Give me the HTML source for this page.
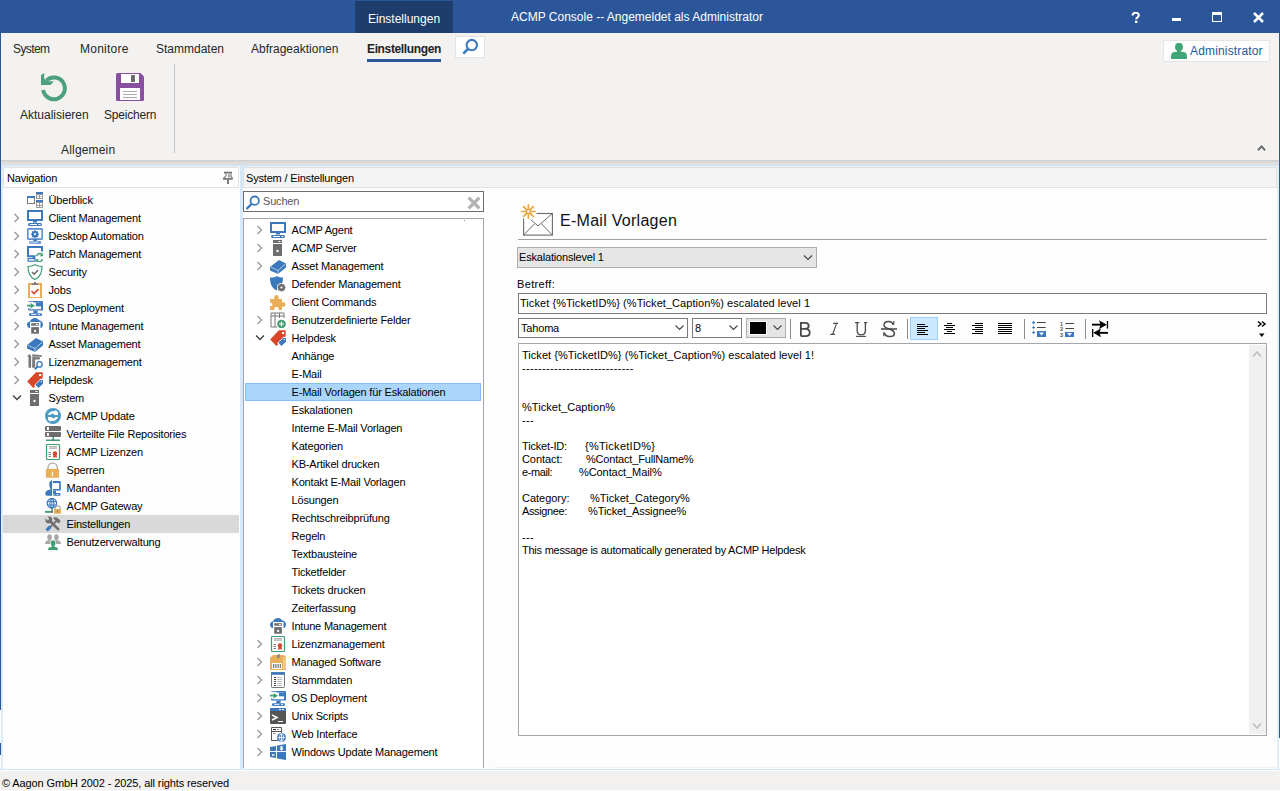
<!DOCTYPE html>
<html><head><meta charset="utf-8">
<style>
*{margin:0;padding:0;box-sizing:border-box}
html,body{width:1280px;height:791px;overflow:hidden;background:#fff;font-family:"Liberation Sans",sans-serif;color:#000}
.ab{position:absolute}
.ic{position:absolute;width:16px;height:16px;line-height:0}
.ic svg,.ab svg{display:block}
.tt{position:absolute;font-size:11px;line-height:18px;white-space:nowrap;letter-spacing:-0.18px}
.rt{position:absolute;font-size:12px;line-height:16px;white-space:nowrap;color:#262626}
.ed{position:absolute;font-size:11px;line-height:13px;white-space:pre;letter-spacing:-0.15px}
</style></head>
<body>
<!-- title bar -->
<div class="ab" style="left:0;top:0;width:1280px;height:33px;background:#2b579a"></div>
<div class="ab" style="left:355px;top:1px;width:98px;height:32px;background:#1e3d6c"></div>
<div class="rt" style="left:368px;top:11px;color:#fff">Einstellungen</div>
<div class="rt" style="left:511px;top:9px;color:#fff">ACMP Console -- Angemeldet als Administrator</div>
<!-- window buttons -->
<svg class="ab" style="left:1131px;top:12px" width="10" height="11" viewBox="0 0 10 11"><path d="M1.6,3.6 C1.6,1.6 3,0.8 4.6,0.8 C6.6,0.8 7.8,1.8 7.8,3.3 C7.8,4.6 7,5.2 6,5.8 C5.4,6.2 5.2,6.5 5.2,7.3" fill="none" stroke="#fff" stroke-width="2.1"/><rect x="4" y="8.6" width="2.4" height="2.4" fill="#fff"/></svg>
<div class="ab" style="left:1172px;top:18px;width:9px;height:3px;background:#fff"></div>
<div class="ab" style="left:1212px;top:12px;width:10px;height:10px;border:1.5px solid #fff;border-top-width:3px"></div>
<svg class="ab" style="left:1253px;top:12px" width="11" height="11" viewBox="0 0 11 11"><path d="M1,1 L10,10 M10,1 L1,10" stroke="#fff" stroke-width="2.5"/></svg>

<!-- ribbon -->
<div class="ab" style="left:0;top:33px;width:1280px;height:127px;background:#f3f2f1"></div>
<div class="rt" style="left:13px;top:41px;letter-spacing:-0.6px">System</div>
<div class="rt" style="left:80px;top:41px;letter-spacing:0.25px">Monitore</div>
<div class="rt" style="left:156px;top:41px">Stammdaten</div>
<div class="rt" style="left:251px;top:41px">Abfrageaktionen</div>
<div class="rt" style="left:367px;top:41px;font-weight:bold;color:#222;letter-spacing:-0.36px">Einstellungen</div>
<div class="ab" style="left:367px;top:59px;width:74px;height:3px;background:#2b579a"></div>
<div class="ab" style="left:455px;top:36px;width:30px;height:22px;background:#fff;border:1px solid #e3e3e3"></div>
<svg class="ab" style="left:455px;top:36px" width="30" height="22" viewBox="0 0 30 22"><circle cx="16.8" cy="9.1" r="5.2" fill="none" stroke="#3b78bd" stroke-width="2.1"/><line x1="12.9" y1="13" x2="8.3" y2="17.6" stroke="#3b78bd" stroke-width="2.6"/></svg>

<div class="ab" style="left:1163px;top:40px;width:107px;height:22px;background:#fdfdfd;border:1px solid #e6e6e6"></div>
<svg class="ab" style="left:1171px;top:43px" width="16" height="16" viewBox="0 0 16 16"><ellipse cx="8" cy="3.9" rx="4" ry="4.1" fill="#40a678"/><rect x="6" y="6" width="3.8" height="5" fill="#40a678"/><path d="M0,15.5 C0,11 0.5,9.5 3.5,9 L6,8.8 H10 L12.5,9 C15.5,9.5 16,11 16,15.5 C16,15.9 15.6,16 15,16 H1 C0.4,16 0,15.9 0,15.5 Z" fill="#40a678"/></svg>
<div class="rt" style="left:1190px;top:43px;color:#2b579a;letter-spacing:0.16px">Administrator</div>

<!-- big buttons -->
<svg class="ab" style="left:34px;top:66px" width="40" height="40" viewBox="0 0 40 40"><path d="M9.2,24 A10.9,10.9 0 1 0 12.6,14.3" fill="none" stroke="#4ca07e" stroke-width="4"/><path d="M7,9 L10.4,7 L10.1,12.6 L14.2,15.2 L19.7,15.2 L16.7,19 L7,19 Z" fill="#4ca07e"/></svg>
<svg class="ab" style="left:110px;top:66px" width="40" height="40" viewBox="0 0 40 40"><path d="M6,8.5 Q6,7 7.5,7 H30.5 L34,10.5 V33.5 Q34,35 32.5,35 H7.5 Q6,35 6,33.5 Z" fill="#8a50a0"/><rect x="11" y="8" width="18" height="9" fill="#fff"/><rect x="21" y="9" width="4" height="7" rx="0.5" fill="#6a6a6a"/><rect x="10" y="22" width="20" height="12" fill="#fff"/><rect x="13" y="25" width="14" height="1" fill="#aaa"/><rect x="13" y="28" width="14" height="1" fill="#aaa"/><rect x="13" y="31" width="14" height="1" fill="#aaa"/></svg>
<div class="rt" style="left:20px;top:107px">Aktualisieren</div>
<div class="rt" style="left:104px;top:107px;letter-spacing:-0.2px">Speichern</div>
<div class="rt" style="left:61px;top:142px;letter-spacing:0.18px">Allgemein</div>
<div class="ab" style="left:174px;top:64px;width:1px;height:89px;background:#c6c6c6"></div>
<svg class="ab" style="left:1257px;top:144px" width="10" height="8" viewBox="0 0 10 8"><path d="M0.9,6.2 L4.5,2.4 L8.1,6.2" fill="none" stroke="#6a6a6a" stroke-width="2"/></svg>

<!-- band under ribbon -->
<div class="ab" style="left:0;top:160px;width:1280px;height:5px;background:linear-gradient(#cfcecd,#d9d9d9 40%,#e2e2e2)"></div>
<div class="ab" style="left:0;top:165px;width:1280px;height:1px;background:#cce4f8"></div>
<div class="ab" style="left:0;top:166px;width:1280px;height:1px;background:#e4f1fc"></div>
<div class="ab" style="left:0;top:167px;width:1280px;height:602px;background:#fdfdfd"></div>

<!-- left window border -->
<div class="ab" style="left:0;top:33px;width:1px;height:677px;background:#2b579a"></div>
<div class="ab" style="left:0;top:743px;width:1px;height:12px;background:#2b579a"></div>
<div class="ab" style="left:1279px;top:33px;width:1px;height:705px;background:#2b579a"></div>

<!-- splitters -->
<div class="ab" style="left:1px;top:166px;width:2px;height:603px;background:#dbecfb"></div>
<div class="ab" style="left:240px;top:166px;width:3px;height:603px;background:#d6e9fb"></div>
<div class="ab" style="left:1277px;top:166px;width:2px;height:603px;background:#e1effb"></div>

<!-- nav header -->
<div class="ab" style="left:3px;top:167px;width:236px;height:21px;background:#fefefe;border:1px solid #e2e2e2"></div>
<div class="tt" style="left:7px;top:169px">Navigation</div>
<svg class="ab" style="left:221px;top:171px" width="14" height="14" viewBox="0 0 14 14"><path d="M3,1.6 H11" stroke="#707070" stroke-width="1.7"/><path d="M4.3,2.4 C5.6,3.4 5.6,4.6 4,6 L2.6,7.2 M10,2.4 V5.4 L11.4,7.2" stroke="#777" stroke-width="1.1" fill="none"/><path d="M2,7.9 H11.8" stroke="#707070" stroke-width="1.7"/><path d="M7,8.6 V13" stroke="#777" stroke-width="1.9"/><rect x="7" y="3.3" width="2" height="3.2" fill="#a0a0a0"/></svg>

<!-- nav tree -->
<div class="ic" style="left:27px;top:192px"><svg width="16" height="16" viewBox="0 0 16 16"><rect x="0.5" y="4.5" width="7" height="7" fill="#fff" stroke="#7a7a7a"/><rect x="0" y="4" width="8" height="2" fill="#3b78bd"/><rect x="9" y="0" width="7" height="7" fill="#9a9a9a"/><rect x="9" y="0" width="7" height="2" fill="#3b78bd"/><rect x="10" y="3" width="2" height="1.5" fill="#fff"/><rect x="13" y="3" width="2" height="1.5" fill="#fff"/><rect x="10" y="5" width="2" height="1" fill="#fff"/><rect x="13" y="5" width="2" height="1" fill="#fff"/><rect x="9" y="8" width="7" height="8" fill="#9a9a9a"/><rect x="9" y="8" width="7" height="2" fill="#3b78bd"/><rect x="10" y="11" width="2" height="2" fill="#fff"/><rect x="13" y="11" width="2" height="2" fill="#fff"/><rect x="10" y="14" width="2" height="1" fill="#fff"/><rect x="13" y="14" width="2" height="1" fill="#fff"/></svg></div><div class="tt" style="left:48.5px;top:191px">Überblick</div>
<div class="ab" style="left:13px;top:213px"><svg width="8" height="10" viewBox="0 0 8 10"><path d="M1.5,1 L5.5,5 L1.5,9" fill="none" stroke="#9a9a9a" stroke-width="1.4"/></svg></div><div class="ic" style="left:27px;top:210px"><svg width="16" height="16" viewBox="0 0 16 16"><rect x="1" y="1" width="14" height="9" fill="none" stroke="#3b78bd" stroke-width="2"/><rect x="6" y="11" width="4" height="1.5" fill="#3b78bd"/><rect x="1" y="13" width="14" height="3" rx="1.5" fill="#3b78bd"/><rect x="3" y="14" width="7" height="1" fill="#fff"/><rect x="11.5" y="14" width="2" height="1" fill="#fff"/></svg></div><div class="tt" style="left:48.5px;top:209px">Client Management</div>
<div class="ab" style="left:13px;top:231px"><svg width="8" height="10" viewBox="0 0 8 10"><path d="M1.5,1 L5.5,5 L1.5,9" fill="none" stroke="#9a9a9a" stroke-width="1.4"/></svg></div><div class="ic" style="left:27px;top:228px"><svg width="16" height="16" viewBox="0 0 16 16"><rect x="0.8" y="0.9" width="14.4" height="10.2" rx="0.6" fill="none" stroke="#5b8fcf" stroke-width="1.6"/><circle cx="8" cy="6.2" r="2.3" fill="none" stroke="#3b78bd" stroke-width="1.9"/><g stroke="#3b78bd" stroke-width="1.4"><line x1="8" y1="2.3" x2="8" y2="10.1"/><line x1="4.1" y1="6.2" x2="11.9" y2="6.2"/><line x1="5.2" y1="3.4" x2="10.8" y2="9"/><line x1="10.8" y1="3.4" x2="5.2" y2="9"/></g><circle cx="8" cy="6.2" r="1.1" fill="#fff"/><rect x="6.3" y="11.1" width="3.6" height="1.9" fill="#3b78bd"/><rect x="2.6" y="13.7" width="11.2" height="1.6" rx="0.8" fill="none" stroke="#5b8fcf" stroke-width="1.1"/><rect x="11.3" y="13.5" width="2" height="2" fill="#5b8fcf"/></svg></div><div class="tt" style="left:48.5px;top:227px">Desktop Automation</div>
<div class="ab" style="left:13px;top:249px"><svg width="8" height="10" viewBox="0 0 8 10"><path d="M1.5,1 L5.5,5 L1.5,9" fill="none" stroke="#9a9a9a" stroke-width="1.4"/></svg></div><div class="ic" style="left:27px;top:246px"><svg width="16" height="16" viewBox="0 0 16 16"><path d="M15,5.5 V1 H1 V10.3 H8.5" fill="none" stroke="#3b78bd" stroke-width="2"/><rect x="5.5" y="10.5" width="2.5" height="2" fill="#3b78bd"/><rect x="1.1" y="12.6" width="7" height="2.6" fill="none" stroke="#3b78bd" stroke-width="1.2"/><path d="M9.6,10.2 A3.3,3.3 0 0 1 14.8,8.2" fill="none" stroke="#3f9e72" stroke-width="1.5"/><path d="M15.9,6.8 V10.2 H12.6 Z" fill="#3f9e72"/><path d="M15.4,13.2 A3.3,3.3 0 0 1 10.2,15.2" fill="none" stroke="#3f9e72" stroke-width="1.5"/><path d="M9.1,16.5 V13.2 H12.4 Z" fill="#3f9e72"/></svg></div><div class="tt" style="left:48.5px;top:245px">Patch Management</div>
<div class="ab" style="left:13px;top:267px"><svg width="8" height="10" viewBox="0 0 8 10"><path d="M1.5,1 L5.5,5 L1.5,9" fill="none" stroke="#9a9a9a" stroke-width="1.4"/></svg></div><div class="ic" style="left:27px;top:264px"><svg width="16" height="16" viewBox="0 0 16 16"><path d="M8,0.8 C10,2 12,2.5 15,2.5 C15,10 12.5,13.5 8,15.5 C3.5,13.5 1,10 1,2.5 C4,2.5 6,2 8,0.8 Z" fill="#fff" stroke="#3f9e72" stroke-width="1.2"/><path d="M5,8 L7.2,10.2 L11,6.2" fill="none" stroke="#6a6a6a" stroke-width="1.6"/></svg></div><div class="tt" style="left:48.5px;top:263px">Security</div>
<div class="ab" style="left:13px;top:285px"><svg width="8" height="10" viewBox="0 0 8 10"><path d="M1.5,1 L5.5,5 L1.5,9" fill="none" stroke="#9a9a9a" stroke-width="1.4"/></svg></div><div class="ic" style="left:27px;top:282px"><svg width="16" height="16" viewBox="0 0 16 16"><rect x="2" y="2" width="12" height="14" fill="#fff" stroke="#e8ae58" stroke-width="2"/><path d="M5,3 H11 V1.5 H9 V0 H7 V1.5 H5 Z" fill="#7a7a7a"/><path d="M4.5,9 L7,11.5 L11.5,7" fill="none" stroke="#d8472a" stroke-width="1.6"/></svg></div><div class="tt" style="left:48.5px;top:281px">Jobs</div>
<div class="ab" style="left:13px;top:303px"><svg width="8" height="10" viewBox="0 0 8 10"><path d="M1.5,1 L5.5,5 L1.5,9" fill="none" stroke="#9a9a9a" stroke-width="1.4"/></svg></div><div class="ic" style="left:27px;top:300px"><svg width="16" height="16" viewBox="0 0 16 16"><path d="M1.3,1 H15 Q16,1 16,2 V10.6 H1.3 V8 H2.3 V9.3 H14 V2.6 H6.3 V1.8 H1.3 Z" fill="#3b78bd"/><rect x="8.9" y="2.6" width="5.3" height="3.7" fill="#3b78bd"/><path d="M0,4.8 H3.6 V3 L7.9,5.8 L3.6,8.6 V6.6 H0 Z" fill="#3f9e72"/><rect x="6.3" y="10.6" width="4.3" height="2.6" fill="#3b78bd"/><rect x="2" y="13.2" width="13" height="2.8" rx="1.3" fill="#3b78bd"/><rect x="4.1" y="14.2" width="5.3" height="0.9" fill="#fff"/><rect x="11.1" y="14.2" width="2.1" height="0.9" fill="#fff"/></svg></div><div class="tt" style="left:48.5px;top:299px">OS Deployment</div>
<div class="ab" style="left:13px;top:321px"><svg width="8" height="10" viewBox="0 0 8 10"><path d="M1.5,1 L5.5,5 L1.5,9" fill="none" stroke="#9a9a9a" stroke-width="1.4"/></svg></div><div class="ic" style="left:27px;top:318px"><svg width="16" height="16" viewBox="0 0 16 16"><path d="M2.5,10 C0.5,9.5 0,8 0,6.8 C0,5 1.3,3.8 3,3.6 C3.6,1.5 5.5,0 8,0 C10,0 11.5,1.2 12,2.3 C14.5,2.5 16,4.5 16,6.5 C16,8.5 15,9.8 13.5,10 Z" fill="#3b78bd"/><rect x="3" y="4" width="10.5" height="12" fill="#fff"/><rect x="4.2" y="5.2" width="7.7" height="2.5" fill="#6d6d6d"/><rect x="8.9" y="6.1" width="2" height="1" fill="#fff"/><rect x="4.2" y="9.1" width="7.7" height="6.6" fill="#6d6d6d"/><rect x="7.1" y="11.9" width="2" height="2" fill="#fff"/></svg></div><div class="tt" style="left:48.5px;top:317px">Intune Management</div>
<div class="ab" style="left:13px;top:339px"><svg width="8" height="10" viewBox="0 0 8 10"><path d="M1.5,1 L5.5,5 L1.5,9" fill="none" stroke="#9a9a9a" stroke-width="1.4"/></svg></div><div class="ic" style="left:27px;top:336px"><svg width="16" height="16" viewBox="0 0 16 16"><path d="M0,9 L9,2 L16,5.5 L16,9.5 L8,16 L0,12.5 Z" fill="#3b78bd"/><path d="M0.5,9 L8,12.5 L15.5,5.8" fill="none" stroke="#e6eef8" stroke-width="0.7"/><line x1="8" y1="12.5" x2="8" y2="16" stroke="#e6eef8" stroke-width="0.7"/></svg></div><div class="tt" style="left:48.5px;top:335px">Asset Management</div>
<div class="ab" style="left:13px;top:357px"><svg width="8" height="10" viewBox="0 0 8 10"><path d="M1.5,1 L5.5,5 L1.5,9" fill="none" stroke="#9a9a9a" stroke-width="1.4"/></svg></div><div class="ic" style="left:27px;top:354px"><svg width="16" height="16" viewBox="0 0 16 16"><path d="M0,2.6 L2.4,0 L4.4,2.6 H4.1 V13.7 H1.5 V2.6 Z" fill="#777"/><path d="M5.3,0.3 L14.7,1.3 V2.9 L12.8,3 V5.6 L8.1,5.6 V13.7 H5.1 Z" fill="#7a7a7a"/><rect x="5.1" y="2.5" width="8" height="0.6" fill="#ccc"/><circle cx="12.5" cy="10.4" r="3.3" fill="#fff"/><circle cx="12.5" cy="10.4" r="2.7" fill="none" stroke="#3b78bd" stroke-width="1.3"/><line x1="10.5" y1="12.5" x2="7.8" y2="15.3" stroke="#3b78bd" stroke-width="1.9"/></svg></div><div class="tt" style="left:48.5px;top:353px">Lizenzmanagement</div>
<div class="ab" style="left:13px;top:375px"><svg width="8" height="10" viewBox="0 0 8 10"><path d="M1.5,1 L5.5,5 L1.5,9" fill="none" stroke="#9a9a9a" stroke-width="1.4"/></svg></div><div class="ic" style="left:27px;top:372px"><svg width="16" height="16" viewBox="0 0 16 16"><path d="M8.9,0.3 H15.7 V6.8 H13.6 L7.2,13.2 L8.3,14.3 L6.4,15.9 L0.2,9.5 Z" fill="#d8472a"/><rect x="12" y="2" width="2.2" height="2.1" fill="#fff"/><path d="M8.4,12.7 L13.2,8 H16 V11.7 L11.4,16 Z" fill="#3b78bd"/><circle cx="14.4" cy="9.6" r="0.7" fill="#fff"/></svg></div><div class="tt" style="left:48.5px;top:371px">Helpdesk</div>
<div class="ab" style="left:12px;top:394px"><svg width="10" height="8" viewBox="0 0 10 8"><path d="M1,1.5 L5,5.5 L9,1.5" fill="none" stroke="#444" stroke-width="1.5"/></svg></div><div class="ic" style="left:30px;top:390px"><svg width="16" height="16" viewBox="0 0 16 16"><rect x="0" y="0" width="9" height="3" fill="#6d6d6d"/><rect x="5.5" y="1" width="2" height="1" fill="#fff"/><rect x="0" y="4" width="9" height="12" fill="#6d6d6d"/><circle cx="4.5" cy="11" r="1.2" fill="#fff"/></svg></div><div class="tt" style="left:48.5px;top:389px">System</div>
<div class="ic" style="left:45px;top:408px"><svg width="16" height="16" viewBox="0 0 16 16"><circle cx="8" cy="8" r="8" fill="#4a9cc4"/><path d="M3,7 C3.8,4.2 6,3 9,3 H10.5 V1.8 L13,4.5 V7 H9.5 C9,5.8 8,5.5 7,5.8 C6,6.1 5.6,6.6 5.4,7 Z" fill="#fff"/><path d="M13,9 C12.2,11.8 10,13 7,13 H5.5 V14.2 L3,11.5 V9 H6.5 C7,10.2 8,10.5 9,10.2 C10,9.9 10.4,9.4 10.6,9 Z" fill="#fff"/></svg></div><div class="tt" style="left:66.5px;top:407px">ACMP Update</div>
<div class="ic" style="left:45px;top:426px"><svg width="16" height="16" viewBox="0 0 16 16"><rect x="0" y="0" width="16" height="5" rx="1" fill="#6d6d6d"/><rect x="2" y="1" width="2" height="3" fill="#fff"/><rect x="0" y="6" width="16" height="5" rx="1" fill="#6d6d6d"/><rect x="2" y="7" width="2" height="3" fill="#fff"/><rect x="7.5" y="11" width="1.5" height="3" fill="#3f9e72"/><rect x="1" y="13.5" width="14" height="1.5" fill="#3f9e72"/><rect x="6.5" y="13.5" width="3" height="1.5" fill="#777"/></svg></div><div class="tt" style="left:66.5px;top:425px">Verteilte File Repositories</div>
<div class="ic" style="left:45px;top:444px"><svg width="16" height="16" viewBox="0 0 16 16"><rect x="1.5" y="0.5" width="13" height="15" rx="1" fill="#fff" stroke="#3f9e72" stroke-width="1.2"/><rect x="4" y="2.5" width="8" height="0.8" fill="#666"/><rect x="4" y="4.3" width="8" height="0.6" fill="#999"/><rect x="3.5" y="8" width="2.5" height="0.8" fill="#666"/><rect x="3.5" y="10" width="2.5" height="0.8" fill="#666"/><rect x="3.5" y="12" width="2.5" height="0.8" fill="#666"/><circle cx="10" cy="9.5" r="2.2" fill="#d8472a"/><path d="M8.5,11 L8,14 L9.5,13 L10,14 L10.5,13 L12,14 L11.5,11 Z" fill="#d8472a"/></svg></div><div class="tt" style="left:66.5px;top:443px">ACMP Lizenzen</div>
<div class="ic" style="left:45px;top:462px"><svg width="16" height="16" viewBox="0 0 16 16"><path d="M3,7 V5.8 A4.65,4.65 0 0 1 12.3,5.8 V7" fill="none" stroke="#a8a8a8" stroke-width="1.3"/><rect x="0.9" y="6.9" width="13.1" height="8.8" fill="#e8ae58"/><rect x="6.9" y="10.5" width="1.2" height="3.6" fill="#fff"/><circle cx="7.5" cy="10.6" r="0.9" fill="#fff"/></svg></div><div class="tt" style="left:66.5px;top:461px">Sperren</div>
<div class="ic" style="left:45px;top:480px"><svg width="16" height="16" viewBox="0 0 16 16"><path d="M7.1,0.3 C5,0.5 4.2,2.5 4.3,4.5 C4.4,7 5.5,8 5.5,9.5 C3,10 0.3,11 0.3,13.5 C0.3,15 1,15.7 2,15.7 H7.1 Z" fill="#3b78bd"/><path d="M7.9,1 H15 Q15.8,1 15.8,2 V10.6 H7.9 V8.9 H14.1 V3.1 H7.9 Z" fill="#3b78bd"/><rect x="8" y="10.6" width="3" height="2.6" fill="#3b78bd"/><rect x="7.9" y="13" width="7.6" height="2.7" rx="1" fill="#3b78bd"/><rect x="8.4" y="14" width="1.2" height="0.8" fill="#fff"/><rect x="11.5" y="14" width="2" height="0.8" fill="#fff"/></svg></div><div class="tt" style="left:66.5px;top:479px">Mandanten</div>
<div class="ic" style="left:45px;top:498px"><svg width="16" height="16" viewBox="0 0 16 16"><circle cx="6.85" cy="5.3" r="4.7" fill="none" stroke="#3b78bd" stroke-width="1.3"/><ellipse cx="6.85" cy="5.3" rx="2" ry="4.7" fill="none" stroke="#3b78bd" stroke-width="1.1"/><line x1="6.85" y1="0.6" x2="6.85" y2="10" stroke="#3b78bd" stroke-width="0.9"/><line x1="2.3" y1="3.6" x2="11.4" y2="3.6" stroke="#3b78bd" stroke-width="1"/><line x1="2.3" y1="7" x2="11.4" y2="7" stroke="#3b78bd" stroke-width="1"/><rect x="6.3" y="10.6" width="1.6" height="2.6" fill="#3f9e72"/><rect x="0" y="12.9" width="5.3" height="1.9" fill="#3f9e72"/><rect x="5.3" y="12.9" width="2.6" height="1.9" fill="#666"/><path d="M10.2,11 V9.8 A2.7,2.7 0 0 1 15.4,9.8 V11" fill="none" stroke="#a8a8a8" stroke-width="1.1"/><rect x="9" y="10.9" width="7" height="4.8" fill="#e8ae58"/><rect x="12.1" y="12" width="0.7" height="2.6" fill="#667"/></svg></div><div class="tt" style="left:66.5px;top:497px">ACMP Gateway</div>
<div class="ab" style="left:3px;top:515px;width:236px;height:18px;background:#d9d9d9"></div>
<div class="ic" style="left:45px;top:516px"><svg width="16" height="16" viewBox="0 0 16 16"><line x1="5" y1="5" x2="13.9" y2="13.9" stroke="#707070" stroke-width="2.7"/><circle cx="3.8" cy="3.9" r="3.4" fill="#707070"/><line x1="3.6" y1="3.6" x2="0.6" y2="0.6" stroke="#d9d9d9" stroke-width="2.3"/><path d="M8,2 C10,0.6 13,1.2 15.7,5.3 L13.7,7.4 L11.3,5.4 Z" fill="#707070"/><line x1="11.8" y1="4.6" x2="5" y2="11.4" stroke="#707070" stroke-width="2"/><path d="M0.5,13.2 L4,9.6 L6.4,12 L2.8,15.6 Z" fill="#3b78bd"/></svg></div><div class="tt" style="left:66.5px;top:515px">Einstellungen</div>
<div class="ic" style="left:45px;top:534px"><svg width="16" height="16" viewBox="0 0 16 16"><ellipse cx="4.6" cy="3.3" rx="2.3" ry="3" fill="#a8a8a8"/><path d="M0,10 C0,7.6 1.5,6.5 3.5,6.3 H6 C7.5,6.5 8.5,7.5 8.5,10 Z" fill="#a8a8a8"/><ellipse cx="11.4" cy="3.3" rx="2.3" ry="3" fill="#a8a8a8"/><path d="M7.5,10 C7.5,7.5 8.5,6.5 10,6.3 H12.5 C14.5,6.5 16,7.6 16,10 Z" fill="#a8a8a8"/><ellipse cx="8.1" cy="9.3" rx="3" ry="3.6" fill="#fff"/><ellipse cx="8.1" cy="9.3" rx="2.3" ry="3" fill="#3f9e72"/><rect x="6.8" y="11.5" width="2.6" height="1.8" fill="#3f9e72"/><path d="M3,16 C3,14 4,13 6,12.9 H10 C12,13 13,14 13,16 Z" fill="#3f9e72"/></svg></div><div class="tt" style="left:66.5px;top:533px">Benutzerverwaltung</div>

<!-- right area header -->
<div class="ab" style="left:243px;top:167px;width:1034px;height:21px;background:#f4f4f4;border:1px solid #e0e0e0"></div>
<div class="tt" style="left:246px;top:169px">System / Einstellungen</div>

<!-- search box -->
<div class="ab" style="left:243px;top:191px;width:241px;height:21px;background:#fff;border:1px solid #6e6e6e"></div>
<svg class="ab" style="left:245px;top:195px" width="16" height="15" viewBox="0 0 16 15"><circle cx="9.7" cy="5.7" r="4.2" fill="none" stroke="#3b78bd" stroke-width="1.8"/><line x1="6.5" y1="9" x2="1.5" y2="14" stroke="#3b78bd" stroke-width="2.4"/></svg>
<div class="tt" style="left:263px;top:192px;color:#555">Suchen</div>
<svg class="ab" style="left:467px;top:196px" width="14" height="14" viewBox="0 0 14 14"><path d="M1.6,1.6 L12.4,12.4 M12.4,1.6 L1.6,12.4" stroke="#b2b2b2" stroke-width="3.3"/></svg>

<!-- mid tree box -->
<div class="ab" style="left:243px;top:218px;width:241px;height:550px;background:#fff;border:1px solid #a3a6ae;border-bottom:none"></div>
<div class="ab" style="left:464px;top:220px;width:1px;height:1px;background:#8a8a8a"></div>
<div class="ab" style="left:256px;top:225px"><svg width="8" height="10" viewBox="0 0 8 10"><path d="M1.5,1 L5.5,5 L1.5,9" fill="none" stroke="#9a9a9a" stroke-width="1.4"/></svg></div><div class="ic" style="left:270px;top:222px"><svg width="16" height="16" viewBox="0 0 16 16"><rect x="1" y="1" width="14" height="9" fill="none" stroke="#3b78bd" stroke-width="2"/><rect x="6" y="11" width="4" height="1.5" fill="#3b78bd"/><rect x="1" y="13" width="14" height="3" rx="1.5" fill="#3b78bd"/><rect x="3" y="14" width="7" height="1" fill="#fff"/><rect x="11.5" y="14" width="2" height="1" fill="#fff"/></svg></div><div class="tt" style="left:291.5px;top:221px">ACMP Agent</div>
<div class="ab" style="left:256px;top:243px"><svg width="8" height="10" viewBox="0 0 8 10"><path d="M1.5,1 L5.5,5 L1.5,9" fill="none" stroke="#9a9a9a" stroke-width="1.4"/></svg></div><div class="ic" style="left:273px;top:240px"><svg width="16" height="16" viewBox="0 0 16 16"><rect x="0" y="0" width="9" height="3" fill="#6d6d6d"/><rect x="5.5" y="1" width="2" height="1" fill="#fff"/><rect x="0" y="4" width="9" height="12" fill="#6d6d6d"/><circle cx="4.5" cy="11" r="1.2" fill="#fff"/></svg></div><div class="tt" style="left:291.5px;top:239px">ACMP Server</div>
<div class="ab" style="left:256px;top:261px"><svg width="8" height="10" viewBox="0 0 8 10"><path d="M1.5,1 L5.5,5 L1.5,9" fill="none" stroke="#9a9a9a" stroke-width="1.4"/></svg></div><div class="ic" style="left:270px;top:258px"><svg width="16" height="16" viewBox="0 0 16 16"><path d="M0,9 L9,2 L16,5.5 L16,9.5 L8,16 L0,12.5 Z" fill="#3b78bd"/><path d="M0.5,9 L8,12.5 L15.5,5.8" fill="none" stroke="#e6eef8" stroke-width="0.7"/><line x1="8" y1="12.5" x2="8" y2="16" stroke="#e6eef8" stroke-width="0.7"/></svg></div><div class="tt" style="left:291.5px;top:257px">Asset Management</div>
<div class="ic" style="left:270px;top:276px"><svg width="16" height="16" viewBox="0 0 16 16"><path d="M7,0 C8.5,1 10.5,1.5 13,1.5 C13,6 12,9 9,11.5 L7,14.5 C2.5,12.5 0,9 0,1.5 C3,1.5 5.5,1 7,0 Z" fill="#3b78bd"/><circle cx="11.5" cy="11.5" r="4.6" fill="#fff"/><circle cx="11.5" cy="11.5" r="2.6" fill="none" stroke="#6d6d6d" stroke-width="1.8"/><g stroke="#6d6d6d" stroke-width="1.3"><line x1="11.5" y1="7.5" x2="11.5" y2="15.5"/><line x1="7.5" y1="11.5" x2="15.5" y2="11.5"/><line x1="8.7" y1="8.7" x2="14.3" y2="14.3"/><line x1="14.3" y1="8.7" x2="8.7" y2="14.3"/></g><circle cx="11.5" cy="11.5" r="1.1" fill="#fff"/></svg></div><div class="tt" style="left:291.5px;top:275px">Defender Management</div>
<div class="ic" style="left:270px;top:294px"><svg width="16" height="16" viewBox="0 0 16 16"><path d="M0,5 H4.5 C4,4 4,1 6.5,1 C9,1 9,4 8.5,5 H12 V8.5 C13,8 15.5,8 15.5,10.5 C15.5,13 13,13 12,12.5 V16 H8.5 C9,15 9,13 6.5,13 C4,13 4,15 4.5,16 H0 V12 C1,12.5 2.5,12 2.5,10.5 C2.5,9 1,8.5 0,9 Z" fill="#e8ae58"/></svg></div><div class="tt" style="left:291.5px;top:293px">Client Commands</div>
<div class="ab" style="left:256px;top:315px"><svg width="8" height="10" viewBox="0 0 8 10"><path d="M1.5,1 L5.5,5 L1.5,9" fill="none" stroke="#9a9a9a" stroke-width="1.4"/></svg></div><div class="ic" style="left:270px;top:312px"><svg width="16" height="16" viewBox="0 0 16 16"><path d="M1,1 H14 V6 M1,1 V15 H7 M1,4 H14 M5,1 V15 M9.5,1 V6" fill="none" stroke="#777" stroke-width="1"/><circle cx="11.5" cy="12" r="4.3" fill="#3f9e72"/><path d="M11.5,9.5 V14.5 M9,12 H14" stroke="#fff" stroke-width="1.2"/></svg></div><div class="tt" style="left:291.5px;top:311px">Benutzerdefinierte Felder</div>
<div class="ab" style="left:255px;top:334px"><svg width="10" height="8" viewBox="0 0 10 8"><path d="M1,1.5 L5,5.5 L9,1.5" fill="none" stroke="#444" stroke-width="1.5"/></svg></div><div class="ic" style="left:270px;top:330px"><svg width="16" height="16" viewBox="0 0 16 16"><path d="M8.9,0.3 H15.7 V6.8 H13.6 L7.2,13.2 L8.3,14.3 L6.4,15.9 L0.2,9.5 Z" fill="#d8472a"/><rect x="12" y="2" width="2.2" height="2.1" fill="#fff"/><path d="M8.4,12.7 L13.2,8 H16 V11.7 L11.4,16 Z" fill="#3b78bd"/><circle cx="14.4" cy="9.6" r="0.7" fill="#fff"/></svg></div><div class="tt" style="left:291.5px;top:329px">Helpdesk</div>
<div class="tt" style="left:291.5px;top:347px">Anhänge</div>
<div class="tt" style="left:291.5px;top:365px">E-Mail</div>
<div class="ab" style="left:245px;top:383px;width:236px;height:18px;background:#aad6fb;border:1px solid #80c0fa"></div>
<div class="tt" style="left:291.5px;top:383px">E-Mail Vorlagen für Eskalationen</div>
<div class="tt" style="left:291.5px;top:401px">Eskalationen</div>
<div class="tt" style="left:291.5px;top:419px">Interne E-Mail Vorlagen</div>
<div class="tt" style="left:291.5px;top:437px">Kategorien</div>
<div class="tt" style="left:291.5px;top:455px">KB-Artikel drucken</div>
<div class="tt" style="left:291.5px;top:473px">Kontakt E-Mail Vorlagen</div>
<div class="tt" style="left:291.5px;top:491px">Lösungen</div>
<div class="tt" style="left:291.5px;top:509px">Rechtschreibprüfung</div>
<div class="tt" style="left:291.5px;top:527px">Regeln</div>
<div class="tt" style="left:291.5px;top:545px">Textbausteine</div>
<div class="tt" style="left:291.5px;top:563px">Ticketfelder</div>
<div class="tt" style="left:291.5px;top:581px">Tickets drucken</div>
<div class="tt" style="left:291.5px;top:599px">Zeiterfassung</div>
<div class="ic" style="left:270px;top:618px"><svg width="16" height="16" viewBox="0 0 16 16"><path d="M2.5,10 C0.5,9.5 0,8 0,6.8 C0,5 1.3,3.8 3,3.6 C3.6,1.5 5.5,0 8,0 C10,0 11.5,1.2 12,2.3 C14.5,2.5 16,4.5 16,6.5 C16,8.5 15,9.8 13.5,10 Z" fill="#3b78bd"/><rect x="3" y="4" width="10.5" height="12" fill="#fff"/><rect x="4.2" y="5.2" width="7.7" height="2.5" fill="#6d6d6d"/><rect x="8.9" y="6.1" width="2" height="1" fill="#fff"/><rect x="4.2" y="9.1" width="7.7" height="6.6" fill="#6d6d6d"/><rect x="7.1" y="11.9" width="2" height="2" fill="#fff"/></svg></div><div class="tt" style="left:291.5px;top:617px">Intune Management</div>
<div class="ab" style="left:256px;top:639px"><svg width="8" height="10" viewBox="0 0 8 10"><path d="M1.5,1 L5.5,5 L1.5,9" fill="none" stroke="#9a9a9a" stroke-width="1.4"/></svg></div><div class="ic" style="left:270px;top:636px"><svg width="16" height="16" viewBox="0 0 16 16"><rect x="1.5" y="0.5" width="13" height="15" rx="1" fill="#fff" stroke="#3f9e72" stroke-width="1.2"/><rect x="4" y="2.5" width="8" height="0.8" fill="#666"/><rect x="4" y="4.3" width="8" height="0.6" fill="#999"/><rect x="3.5" y="8" width="2.5" height="0.8" fill="#666"/><rect x="3.5" y="10" width="2.5" height="0.8" fill="#666"/><rect x="3.5" y="12" width="2.5" height="0.8" fill="#666"/><circle cx="10" cy="9.5" r="2.2" fill="#d8472a"/><path d="M8.5,11 L8,14 L9.5,13 L10,14 L10.5,13 L12,14 L11.5,11 Z" fill="#d8472a"/></svg></div><div class="tt" style="left:291.5px;top:635px">Lizenzmanagement</div>
<div class="ab" style="left:256px;top:657px"><svg width="8" height="10" viewBox="0 0 8 10"><path d="M1.5,1 L5.5,5 L1.5,9" fill="none" stroke="#9a9a9a" stroke-width="1.4"/></svg></div><div class="ic" style="left:270px;top:654px"><svg width="16" height="16" viewBox="0 0 16 16"><path d="M0,4 L3,1 H14 L16,3 V16 H0 Z" fill="#e8ae58"/><path d="M13,4 L16,2 V15 L13,16 Z" fill="#f3c880"/><path d="M7,1 L10,0 L9.5,4 L7,4 Z" fill="#888"/><rect x="2" y="9" width="10" height="6" fill="#fff"/><g fill="#555"><rect x="3" y="10" width="0.8" height="4"/><rect x="4.8" y="10" width="0.8" height="4"/><rect x="6.6" y="10" width="0.8" height="4"/><rect x="8.4" y="10" width="0.8" height="4"/><rect x="10.2" y="10" width="0.8" height="4"/></g></svg></div><div class="tt" style="left:291.5px;top:653px">Managed Software</div>
<div class="ab" style="left:256px;top:675px"><svg width="8" height="10" viewBox="0 0 8 10"><path d="M1.5,1 L5.5,5 L1.5,9" fill="none" stroke="#9a9a9a" stroke-width="1.4"/></svg></div><div class="ic" style="left:270px;top:672px"><svg width="16" height="16" viewBox="0 0 16 16"><rect x="1.5" y="0.7" width="13" height="14.8" rx="0.8" fill="#fff" stroke="#777" stroke-width="1"/><rect x="1" y="0.2" width="14" height="2.6" fill="#3b78bd"/><g fill="#333"><rect x="4" y="5" width="2" height="0.9"/><rect x="4" y="7" width="2" height="0.9"/><rect x="4" y="9" width="2" height="0.9"/><rect x="4" y="11" width="2" height="0.9"/><rect x="4" y="13" width="2" height="0.9"/></g><g fill="#999"><rect x="7" y="5" width="5" height="0.7"/><rect x="7" y="7" width="5" height="0.7"/><rect x="7" y="9" width="5" height="0.7"/><rect x="7" y="11" width="5" height="0.7"/><rect x="7" y="13" width="5" height="0.7"/></g></svg></div><div class="tt" style="left:291.5px;top:671px">Stammdaten</div>
<div class="ab" style="left:256px;top:693px"><svg width="8" height="10" viewBox="0 0 8 10"><path d="M1.5,1 L5.5,5 L1.5,9" fill="none" stroke="#9a9a9a" stroke-width="1.4"/></svg></div><div class="ic" style="left:270px;top:690px"><svg width="16" height="16" viewBox="0 0 16 16"><path d="M1.3,1 H15 Q16,1 16,2 V10.6 H1.3 V8 H2.3 V9.3 H14 V2.6 H6.3 V1.8 H1.3 Z" fill="#3b78bd"/><rect x="8.9" y="2.6" width="5.3" height="3.7" fill="#3b78bd"/><path d="M0,4.8 H3.6 V3 L7.9,5.8 L3.6,8.6 V6.6 H0 Z" fill="#3f9e72"/><rect x="6.3" y="10.6" width="4.3" height="2.6" fill="#3b78bd"/><rect x="2" y="13.2" width="13" height="2.8" rx="1.3" fill="#3b78bd"/><rect x="4.1" y="14.2" width="5.3" height="0.9" fill="#fff"/><rect x="11.1" y="14.2" width="2.1" height="0.9" fill="#fff"/></svg></div><div class="tt" style="left:291.5px;top:689px">OS Deployment</div>
<div class="ab" style="left:256px;top:711px"><svg width="8" height="10" viewBox="0 0 8 10"><path d="M1.5,1 L5.5,5 L1.5,9" fill="none" stroke="#9a9a9a" stroke-width="1.4"/></svg></div><div class="ic" style="left:270px;top:708px"><svg width="16" height="16" viewBox="0 0 16 16"><rect x="0" y="0" width="16" height="16" rx="1" fill="#555"/><rect x="0" y="0" width="16" height="3" fill="#3b78bd"/><rect x="9" y="1" width="2" height="0.9" fill="#fff"/><rect x="12" y="1" width="2" height="0.9" fill="#fff"/><path d="M2,7 L7,9.5 L2,12" fill="none" stroke="#fff" stroke-width="1.5"/><rect x="8" y="13" width="5" height="1" fill="#fff"/></svg></div><div class="tt" style="left:291.5px;top:707px">Unix Scripts</div>
<div class="ab" style="left:256px;top:729px"><svg width="8" height="10" viewBox="0 0 8 10"><path d="M1.5,1 L5.5,5 L1.5,9" fill="none" stroke="#9a9a9a" stroke-width="1.4"/></svg></div><div class="ic" style="left:270px;top:726px"><svg width="16" height="16" viewBox="0 0 16 16"><path d="M8,14.5 H1.5 V1.5 H11.5 V7" fill="#fff" stroke="#555" stroke-width="1"/><line x1="1.5" y1="5.5" x2="11.5" y2="5.5" stroke="#555" stroke-width="1"/><rect x="3" y="3" width="3" height="1" fill="#333"/><rect x="7" y="3" width="2" height="1" fill="#888"/><rect x="3" y="7" width="2.5" height="1" fill="#888"/><circle cx="11.5" cy="11.5" r="4.5" fill="#3b78bd"/><g stroke="#fff" stroke-width="0.8"><line x1="7.5" y1="11.5" x2="15.5" y2="11.5"/><line x1="11.5" y1="7.5" x2="11.5" y2="15.5"/><ellipse cx="11.5" cy="11.5" rx="2" ry="4" fill="none"/></g></svg></div><div class="tt" style="left:291.5px;top:725px">Web Interface</div>
<div class="ab" style="left:256px;top:747px"><svg width="8" height="10" viewBox="0 0 8 10"><path d="M1.5,1 L5.5,5 L1.5,9" fill="none" stroke="#9a9a9a" stroke-width="1.4"/></svg></div><div class="ic" style="left:270px;top:744px"><svg width="16" height="16" viewBox="0 0 16 16"><path d="M0,3 L6,2 V7 H0 Z" fill="#3b78bd"/><path d="M7,1.5 L16,0 V7 H7 Z" fill="#3b78bd"/><path d="M0,8 H6 V14 L0,13 Z" fill="#3b78bd"/><path d="M7,8 H16 V16 L7,14.5 Z" fill="#3b78bd"/><path d="M10.5,2 V4.5 H9.5 L11.5,7 L13.5,4.5 H12.5 V2 Z" fill="#fff"/><path d="M2.5,10 V11.5 H4 V10" fill="none" stroke="#fff" stroke-width="0.9"/></svg></div><div class="tt" style="left:291.5px;top:743px">Windows Update Management</div>

<!-- content -->
<svg class="ab" style="left:518px;top:203px" width="36" height="34" viewBox="0 0 36 34"><rect x="5.6" y="10.5" width="28.8" height="21.6" fill="#fff" stroke="#6a6a6a" stroke-width="1.1"/><path d="M5.6,10.5 L20,23 L34.4,10.5 M5.6,32.1 L16.5,20.8 M34.4,32.1 L23.5,20.8" fill="none" stroke="#6a6a6a" stroke-width="1"/><circle cx="10.4" cy="8.5" r="8.6" fill="#fff"/><g stroke="#e8a640" stroke-width="1.7" stroke-linecap="round"><line x1="10.4" y1="1.8" x2="10.4" y2="15.2"/><line x1="3.7" y1="8.5" x2="17.1" y2="8.5"/><line x1="5.6" y1="3.7" x2="15.2" y2="13.3"/><line x1="15.2" y1="3.7" x2="5.6" y2="13.3"/></g><circle cx="10.4" cy="8.5" r="2.7" fill="#e8a640"/><circle cx="10.4" cy="8.5" r="1.3" fill="#fff"/></svg>
<div class="ab" style="left:560px;top:211px;font-size:16px;line-height:20px;white-space:nowrap;color:#111;letter-spacing:0.28px">E-Mail Vorlagen</div>
<div class="ab" style="left:518px;top:239px;width:749px;height:1px;background:#a0a0a0"></div>

<div class="ab" style="left:517px;top:247px;width:300px;height:21px;background:#e5e5e5;border:1px solid #adadad"></div>
<div class="tt" style="left:519px;top:248px">Eskalationslevel 1</div>
<svg class="ab" style="left:803px;top:254px" width="10" height="7" viewBox="0 0 10 7"><path d="M1,1.5 L5,5.5 L9,1.5" fill="none" stroke="#444" stroke-width="1.1"/></svg>

<div class="tt" style="left:517px;top:275px;letter-spacing:0.35px">Betreff:</div>
<div class="ab" style="left:518px;top:293px;width:749px;height:21px;background:#fff;border:1px solid #7a7a7a"></div>
<div class="tt" style="left:520px;top:294px;letter-spacing:0.06px">Ticket {%TicketID%} (%Ticket_Caption%) escalated level 1</div>

<!-- toolbar -->
<div class="ab" style="left:518px;top:318px;width:170px;height:20px;background:#fff;border:1px solid #7a7a7a"></div>
<div class="tt" style="left:521px;top:319px">Tahoma</div>
<svg class="ab" style="left:675px;top:325px" width="9" height="6" viewBox="0 0 9 6"><path d="M0.5,0.5 L4.5,4.5 L8.5,0.5" fill="none" stroke="#444" stroke-width="1.1"/></svg>
<div class="ab" style="left:692px;top:318px;width:50px;height:20px;background:#fff;border:1px solid #7a7a7a"></div>
<div class="tt" style="left:695px;top:319px">8</div>
<svg class="ab" style="left:729px;top:325px" width="9" height="6" viewBox="0 0 9 6"><path d="M0.5,0.5 L4.5,4.5 L8.5,0.5" fill="none" stroke="#444" stroke-width="1.1"/></svg>
<div class="ab" style="left:746px;top:318px;width:40px;height:20px;background:#e5e5e5;border:1px solid #adadad"></div>
<div class="ab" style="left:749px;top:321px;width:18px;height:14px;background:#fff"></div><div class="ab" style="left:750px;top:322px;width:16px;height:12px;background:#000"></div>
<svg class="ab" style="left:773px;top:325px" width="9" height="6" viewBox="0 0 9 6"><path d="M0.5,0.5 L4.5,4.5 L8.5,0.5" fill="none" stroke="#444" stroke-width="1.1"/></svg>
<div class="ab" style="left:790px;top:319px;width:1px;height:20px;background:#8c8c8c"></div>
<svg class="ab" style="left:795px;top:316px" width="110" height="26" viewBox="795 316 110 26"><g fill="none" stroke="#4a4a4a">
<path d="M800.9,336.2 V322.8 H805.2 C807.6,322.8 808.7,324.1 808.7,325.8 C808.7,327.6 807.5,328.9 805.2,328.9 H800.9 M805.2,328.9 C808.3,328.9 809.7,330.4 809.7,332.5 C809.7,334.8 808.1,336.2 805.6,336.2 H800.9" stroke-width="1.8"/>
<path d="M833.2,323.4 H838 M830.2,334.4 H835 M836.5,323.6 L832.6,334.2" stroke-width="1.1"/>
<path d="M855,322.6 H859.3 M864,322.6 H867.2 M857.2,322.8 V330.5 C857.2,333.4 858.6,334.8 861.2,334.8 C863.8,334.8 865.4,333.4 865.4,330.5 V322.8" stroke-width="1.3"/>
<path d="M856,336.4 H866" stroke-width="1.1"/>
<path d="M893.2,324.8 C892.5,322.4 890.8,321.4 888.7,321.4 C885.8,321.4 884,323 884,325 C884,327.4 886.2,328.2 889,329 C892.2,330 894.4,331 894.4,333.4 C894.4,335.4 892.5,336.5 889.6,336.5 C886.9,336.5 885,335.2 884.2,332.5" stroke-width="1.5"/>
<path d="M893.8,321 V324.8 M883.8,332.5 V336.2" stroke-width="1.2"/>
<path d="M881,329 H897" stroke-width="1.6"/>
</g></svg>
<div class="ab" style="left:907px;top:319px;width:1px;height:20px;background:#8c8c8c"></div>
<div class="ab" style="left:910px;top:317px;width:28px;height:23px;background:#cce8ff;border:1px solid #99d1ff"></div>
<svg class="ab" style="left:910px;top:318px" width="110" height="20" viewBox="910 318 110 20" shape-rendering="crispEdges"><g fill="#000"><rect x="917" y="324" width="8" height="1"/><rect x="917" y="326" width="11" height="1"/><rect x="917" y="328" width="8" height="1"/><rect x="917" y="330" width="11" height="1"/><rect x="917" y="332" width="8" height="1"/><rect x="917" y="334" width="11" height="1"/><rect x="947" y="323" width="5" height="1"/><rect x="944" y="325" width="11" height="1"/><rect x="946" y="327" width="7" height="1"/><rect x="944" y="329" width="11" height="1"/><rect x="947" y="331" width="5" height="1"/><rect x="944" y="333" width="11" height="1"/><rect x="975" y="323" width="8" height="1"/><rect x="972" y="325" width="11" height="1"/><rect x="975" y="327" width="8" height="1"/><rect x="972" y="329" width="11" height="1"/><rect x="975" y="331" width="8" height="1"/><rect x="972" y="333" width="11" height="1"/><rect x="998" y="323" width="14" height="1"/><rect x="998" y="325" width="14" height="1"/><rect x="998" y="327" width="14" height="1"/><rect x="998" y="329" width="14" height="1"/><rect x="998" y="331" width="14" height="1"/><rect x="998" y="333" width="14" height="1"/></g></svg>
<div class="ab" style="left:1024px;top:319px;width:1px;height:20px;background:#8c8c8c"></div>
<svg class="ab" style="left:1028px;top:318px" width="84" height="22" viewBox="1028 318 84 22">
<g fill="#3b78bd"><path d="M1033.6,321 L1035.2,322.6 L1033.6,324.2 L1032,322.6 Z"/><path d="M1033.6,325.9 L1035.2,327.5 L1033.6,329.1 L1032,327.5 Z"/><path d="M1033.6,330.9 L1035.2,332.5 L1033.6,334.1 L1032,332.5 Z"/>
<rect x="1037" y="331" width="9" height="6"/><rect x="1065" y="332" width="9" height="5"/></g>
<g fill="#fff"><path d="M1039,332.5 H1044 L1041.5,335.5 Z"/><path d="M1067,333 H1072 L1069.5,336 Z"/></g>
<g fill="#444"><rect x="1037" y="322" width="8.7" height="1"/><rect x="1037" y="327" width="8.7" height="1"/><rect x="1065.4" y="323" width="8.6" height="1"/><rect x="1065.4" y="328" width="8.6" height="1"/></g>
<g font-family="Liberation Sans" font-size="5.5" font-weight="bold" fill="#555"><text x="1060" y="326">1</text><text x="1060" y="331.2">2</text><text x="1060" y="336.5">3</text></g>
<g fill="#000"><rect x="1092" y="323.7" width="13" height="1.9"/><path d="M1099,320.2 L1106.8,324.65 L1099,329.1 L1100.6,324.65 Z"/><rect x="1106.8" y="321" width="1.3" height="7.6"/>
<rect x="1095" y="331.9" width="13" height="1.9"/><path d="M1101,328.4 L1093.2,332.85 L1101,337.3 L1099.4,332.85 Z"/><rect x="1092" y="329" width="1.3" height="8"/></g>
</svg>
<div class="ab" style="left:1085px;top:319px;width:1px;height:20px;background:#8c8c8c"></div>
<svg class="ab" style="left:1257px;top:320px" width="10" height="18" viewBox="0 0 10 18"><path d="M1,1.5 L4,4 L1,6.5 M5,1.5 L8,4 L5,6.5" fill="none" stroke="#000" stroke-width="1.5"/><path d="M2,13.5 H7.5 L4.75,17 Z" fill="#000"/></svg>

<!-- editor -->
<div class="ab" style="left:518px;top:343px;width:749px;height:393px;background:#fff;border:1px solid #a3a6ae"></div>
<div class="ab" style="left:1249px;top:345px;width:17px;height:389px;background:#f0f0f0"></div>
<svg class="ab" style="left:1252px;top:350px" width="10" height="8" viewBox="0 0 10 8"><path d="M1,6.5 L5,2 L9,6.5" fill="none" stroke="#c2c2c2" stroke-width="1.8"/></svg>
<svg class="ab" style="left:1252px;top:722px" width="10" height="8" viewBox="0 0 10 8"><path d="M1,1.5 L5,6 L9,1.5" fill="none" stroke="#c2c2c2" stroke-width="1.8"/></svg>

<div class="ed" style="left:522px;top:349px;letter-spacing:0.04px">Ticket {%TicketID%} (%Ticket_Caption%) escalated level 1!</div>
<div class="ed" style="left:522px;top:362px;letter-spacing:0.33px">----------------------------</div>
<div class="ed" style="left:522px;top:401px;letter-spacing:0.04px">%Ticket_Caption%</div>
<div class="ed" style="left:522px;top:414px;letter-spacing:0.33px">---</div>
<div class="ed" style="left:522px;top:440px;letter-spacing:-0.17px">Ticket-ID:</div>
<div class="ed" style="left:585px;top:440px;letter-spacing:0.28px">{%TicketID%}</div>
<div class="ed" style="left:522px;top:453px;letter-spacing:-0.07px">Contact:</div>
<div class="ed" style="left:586px;top:453px;letter-spacing:-0.18px">%Contact_FullName%</div>
<div class="ed" style="left:522px;top:466px;letter-spacing:-0.4px">e-mail:</div>
<div class="ed" style="left:579px;top:466px;letter-spacing:-0.08px">%Contact_Mail%</div>
<div class="ed" style="left:522px;top:492px;letter-spacing:-0.02px">Category:</div>
<div class="ed" style="left:590px;top:492px;letter-spacing:0.03px">%Ticket_Category%</div>
<div class="ed" style="left:522px;top:505px;letter-spacing:-0.39px">Assignee:</div>
<div class="ed" style="left:588px;top:505px;letter-spacing:-0.1px">%Ticket_Assignee%</div>
<div class="ed" style="left:522px;top:531px;letter-spacing:0.33px">---</div>
<div class="ed" style="left:522px;top:544px;letter-spacing:-0.24px">This message is automatically generated by ACMP Helpdesk</div>

<!-- bottom -->
<div class="ab" style="left:0;top:769px;width:1280px;height:1px;background:#cfe6fb"></div>
<div class="ab" style="left:0;top:770px;width:1280px;height:21px;background:#f2f1f0"></div>
<div class="ab" style="left:0;top:770px;width:1280px;height:1px;background:#fff"></div>
<div class="ab" style="left:0;top:790px;width:1280px;height:1px;background:#fbfbfb"></div>
<div class="ab" style="left:495px;top:767px;width:781px;height:1px;background:#f0f0f0"></div>
<div class="tt" style="left:2px;top:776px;line-height:14px;letter-spacing:-0.11px">© Aagon GmbH 2002 - 2025, all rights reserved</div>
</body></html>
